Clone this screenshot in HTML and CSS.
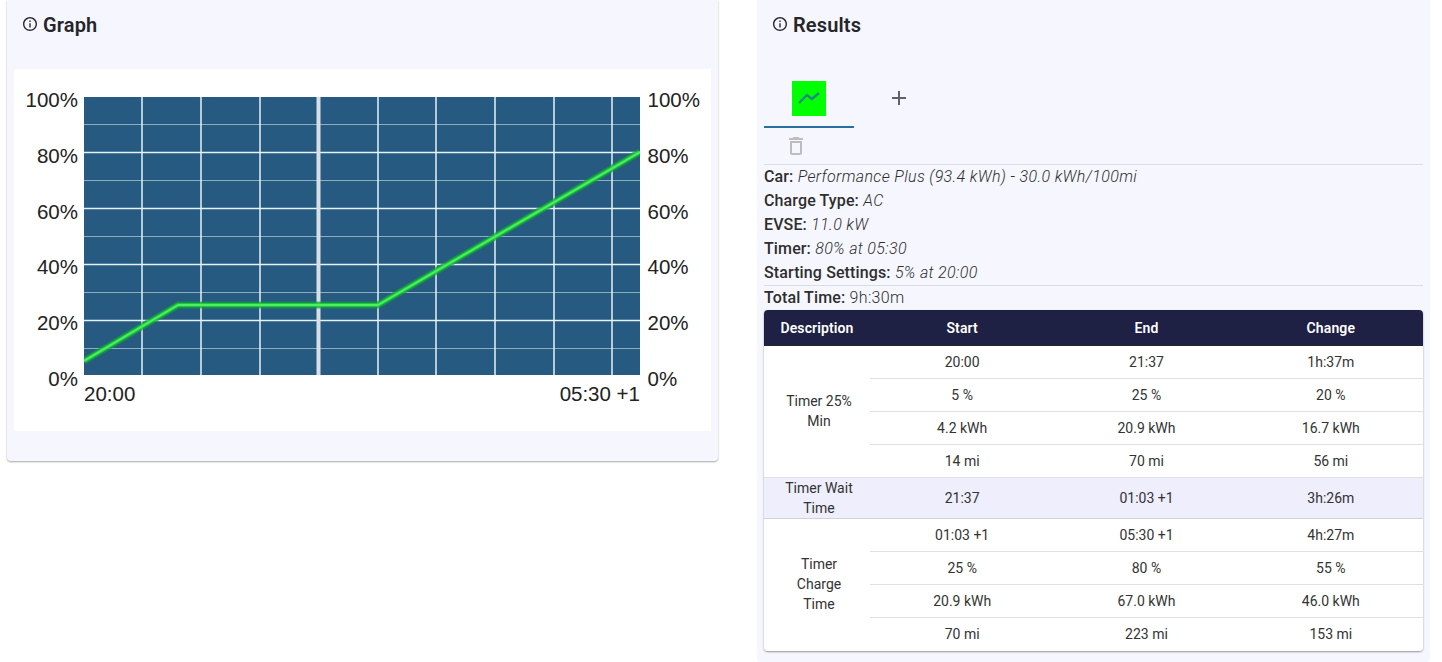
FILE: index.html
```html
<!DOCTYPE html>
<html lang="en">
<head>
    <meta charset="UTF-8">
    <meta name="viewport" content="width=device-width, initial-scale=1.0">
    <title>Charge Results</title>
    <link rel="stylesheet" href="styles.css">
</head>
<body>
    <section class="card card-graph">
        <h2 class="card-title">
            <svg class="info-icon" viewBox="2 2 20 20"><path d="M11 7h2v2h-2zm0 4h2v6h-2zm1-9C6.48 2 2 6.48 2 12s4.48 10 10 10 10-4.48 10-10S17.52 2 12 2zm0 18c-4.41 0-8-3.59-8-8s3.59-8 8-8 8 3.59 8 8-3.59 8-8 8z"/></svg>
            Graph
        </h2>
        <div class="chart">
            <svg class="chart-svg" width="697" height="362" viewBox="0 0 697 362">
                <defs>
                    <clipPath id="plotClip"><rect x="70" y="28" width="556" height="278"/></clipPath>
                </defs>
                <rect class="plot" x="70" y="28" width="556" height="278"/>
                <path class="grid-minor" d="M70 55.5H626M70 111.5H626M70 167.5H626M70 223.5H626M70 279.5H626"/>
                <path class="grid-major" d="M70 83.5H626M70 139.5H626M70 195.5H626M70 251.5H626"/>
                <path class="grid-major" d="M128 28V306M187 28V306M246 28V306M364 28V306M422 28V306M481 28V306M540 28V306M598 28V306"/>
                <path class="grid-now" d="M304.5 28V306"/>
                <g clip-path="url(#plotClip)">
                    <path class="line-glow" d="M70 292L164 236H364L626 83"/>
                    <path class="line-mid" d="M70 292L164 236H364L626 83"/>
                    <path class="line-core" d="M70 292L164 236H364L626 83"/>
                </g>
                <g class="axis-left">
                    <text x="64" y="38">100%</text>
                    <text x="64" y="94">80%</text>
                    <text x="64" y="150">60%</text>
                    <text x="64" y="205">40%</text>
                    <text x="64" y="261">20%</text>
                    <text x="64" y="317">0%</text>
                </g>
                <g class="axis-right">
                    <text x="633.5" y="38">100%</text>
                    <text x="633.5" y="94">80%</text>
                    <text x="633.5" y="150">60%</text>
                    <text x="633.5" y="205">40%</text>
                    <text x="633.5" y="261">20%</text>
                    <text x="633.5" y="317">0%</text>
                </g>
                <text class="axis-time" x="70" y="332">20:00</text>
                <text class="axis-time time-end" x="626" y="332">05:30 +1</text>
            </svg>
        </div>
    </section>

    <section class="card card-results">
        <h2 class="card-title">
            <svg class="info-icon" viewBox="2 2 20 20"><path d="M11 7h2v2h-2zm0 4h2v6h-2zm1-9C6.48 2 2 6.48 2 12s4.48 10 10 10 10-4.48 10-10S17.52 2 12 2zm0 18c-4.41 0-8-3.59-8-8s3.59-8 8-8 8 3.59 8 8-3.59 8-8 8z"/></svg>
            Results
        </h2>

        <div class="tabs">
            <div class="tab active">
                <svg class="tab-swatch" viewBox="0 0 34 35" width="34" height="35"><path d="M7 22L15 14L20 18L27 12"/></svg>
            </div>
            <div class="tab">
                <svg class="plus-icon" viewBox="0 0 24 24" width="24" height="24"><path d="M19 13h-6v6h-2v-6H5v-2h6V5h2v6h6v2z"/></svg>
            </div>
        </div>

        <div class="tab-tools">
            <svg class="trash-icon" viewBox="0 0 24 24" width="24" height="24"><path d="M6 19c0 1.1.9 2 2 2h8c1.1 0 2-.9 2-2V7H6v12zM8 9h8v10H8V9zm7.5-5l-1-1h-5l-1 1H5v2h14V4z"/></svg>
        </div>

        <div class="details">
            <div><b>Car:</b> <i>Performance Plus (93.4 kWh) - 30.0 kWh/100mi</i></div>
            <div><b>Charge Type:</b> <i>AC</i></div>
            <div><b>EVSE:</b> <i>11.0 kW</i></div>
            <div><b>Timer:</b> <i>80% at 05:30</i></div>
            <div><b>Starting Settings:</b> <i>5% at 20:00</i></div>
        </div>
        <div class="total"><b>Total Time:</b> 9h:30m</div>

        <div class="table-wrap">
            <table class="results-table">
                <colgroup>
                    <col class="col-desc">
                    <col><col><col>
                </colgroup>
                <thead>
                    <tr><th>Description</th><th>Start</th><th>End</th><th>Change</th></tr>
                </thead>
                <tbody>
                    <tr><td rowspan="4" class="desc group-desc">Timer 25% Min</td><td>20:00</td><td>21:37</td><td>1h:37m</td></tr>
                    <tr><td>5 %</td><td>25 %</td><td>20 %</td></tr>
                    <tr><td>4.2 kWh</td><td>20.9 kWh</td><td>16.7 kWh</td></tr>
                    <tr><td>14 mi</td><td>70 mi</td><td>56 mi</td></tr>
                    <tr class="wait-row"><td class="desc">Timer Wait Time</td><td>21:37</td><td>01:03 +1</td><td>3h:26m</td></tr>
                    <tr><td rowspan="4" class="desc group-desc last-desc">Timer Charge Time</td><td>01:03 +1</td><td>05:30 +1</td><td>4h:27m</td></tr>
                    <tr><td>25 %</td><td>80 %</td><td>55 %</td></tr>
                    <tr><td>20.9 kWh</td><td>67.0 kWh</td><td>46.0 kWh</td></tr>
                    <tr class="last-row"><td>70 mi</td><td>223 mi</td><td>153 mi</td></tr>
                </tbody>
            </table>
        </div>
    </section>
</body>
</html>
```

FILE: styles.css
```css
* {
    margin: 0;
    padding: 0;
    box-sizing: border-box;
}

body {
    display: flex;
    align-items: flex-start;
    gap: 39px;
    height: 100vh;
    padding-left: 7px;
    overflow: hidden;
    background: #fff;
    font-family: Roboto, sans-serif;
    color: #2a2a2e;
}

.card {
    padding: 0 7px;
    background: #f6f7fe;
    border-radius: 0 0 4px 4px;
}

.card-graph {
    width: 711px;
    padding-bottom: 30px;
    box-shadow: 0 1px 2px rgba(0, 0, 0, 0.35);
}

.card-results {
    align-self: stretch;
    width: 673px;
}

.card-title {
    display: flex;
    align-items: center;
    gap: 6px;
    height: 69px;
    padding: 13px 0 32px 9px;
    font-size: 20px;
    font-weight: 600;
    line-height: 24px;
    letter-spacing: 0.15px;
    color: #25252b;
}

.info-icon {
    width: 14px;
    height: 14px;
    margin-top: -2px;
    fill: #2a2a2e;
}

/* Chart */
.chart {
    height: 362px;
    background: #fff;
}

.chart-svg {
    display: block;
    font-family: "Liberation Sans", Arial, sans-serif;
    font-size: 20.5px;
    fill: #222;
}

.plot {
    fill: #265a80;
}

.grid-minor {
    fill: none;
    stroke: #cfe6f0;
    stroke-width: 1;
    opacity: 0.6;
}

.grid-major {
    fill: none;
    stroke: #e2f2f8;
    stroke-width: 1.5;
}

.grid-now {
    fill: none;
    stroke: #d8e0e6;
    stroke-width: 4;
}

.line-glow {
    fill: none;
    stroke: #13a335;
    stroke-width: 7;
    opacity: 0.7;
    filter: blur(0.6px);
}

.line-mid {
    fill: none;
    stroke: #1fd145;
    stroke-width: 4;
    opacity: 0.8;
}

.line-core {
    fill: none;
    stroke: #4df05c;
    stroke-width: 2;
}

.axis-left {
    text-anchor: end;
}

.time-end {
    text-anchor: end;
}

/* Tabs */
.tabs {
    display: flex;
    height: 59px;
}

.tab {
    display: flex;
    align-items: center;
    justify-content: center;
    width: 90px;
    padding-bottom: 2px;
}

.tab.active {
    padding: 2px 0 0;
    border-bottom: 2px solid #2a6f9e;
}

.tab-swatch {
    background: #00ff00;
}

.tab-swatch path {
    fill: none;
    stroke: #1d8a80;
    stroke-width: 2.4;
}

.plus-icon {
    fill: #5f6368;
}

.tab-tools {
    display: flex;
    align-items: center;
    height: 37px;
    padding-left: 20px;
    border-bottom: 1px solid #dcdde2;
}

.trash-icon {
    fill: #bdbdbd;
}

/* Details */
.details {
    border-bottom: 1px solid #dcdde2;
}

.details div,
.total {
    font-size: 16px;
    font-weight: 300;
    line-height: 24px;
    letter-spacing: 0.35px;
    color: #2e2e2e;
}

.details b,
.total b {
    font-weight: 500;
    letter-spacing: 0.12px;
}

/* Table */
.table-wrap {
    border-radius: 4px;
    overflow: hidden;
    box-shadow: 0 1px 2px rgba(0, 0, 0, 0.4);
}

.results-table {
    width: 100%;
    table-layout: fixed;
    border-collapse: separate;
    border-spacing: 0;
    background: #fff;
    font-size: 14px;
    line-height: 20px;
    text-align: center;
}

.col-desc {
    width: 106px;
}

.results-table th {
    height: 36px;
    padding-bottom: 1px;
    background: #1e2044;
    color: #fff;
    font-weight: 600;
    letter-spacing: 0.12px;
}

.results-table td {
    height: 33px;
    border-bottom: 1px solid rgba(0, 0, 0, 0.12);
    color: #333;
}

.results-table td.desc {
    padding: 0 12px 0 16px;
}

.results-table td.group-desc {
    padding-bottom: 2px;
}

.results-table .wait-row td {
    height: 41px;
    background: #eeeefc;
}

.results-table .last-row td {
    padding-bottom: 1px;
    border-bottom: none;
}

.results-table td.last-desc {
    border-bottom: none;
}
```
